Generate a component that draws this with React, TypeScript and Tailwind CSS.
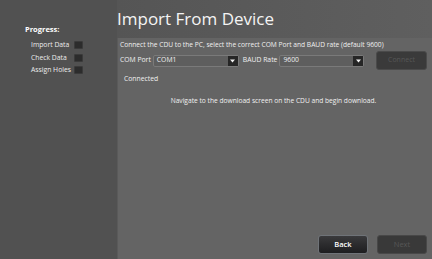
import React from 'react';

const steps = ['Import Data', 'Check Data', 'Assign Holes'];

const SelectBox = ({ value, width }: { value: string; width: string }) => (
  <div className={`flex h-[12px] ${width} items-stretch rounded-[2px] border border-[#7a7a7a] bg-[#5e5e5e]`}>
    <div className="flex flex-1 items-center pl-[3px] text-[6.8px] text-[#f0f0f0]">{value}</div>
    <div className="flex w-[10px] items-center justify-center bg-[#262626]">
      <svg width="5" height="4" viewBox="0 0 5 4">
        <path d="M0 0.5 L5 0.5 L2.5 3.5 Z" fill="#f2f2f2" />
      </svg>
    </div>
  </div>
);

export default function App() {
  return (
    <div
      className="flex h-[259px] w-[432px] overflow-hidden bg-[#525252] text-[#f0f0f0]"
      style={{ fontFamily: '"Open Sans", "Noto Sans", sans-serif' }}
    >
      <aside className="w-[117px] shrink-0 bg-[#515151] pt-[24px]">
        <div className="pl-[25px] text-[7.5px] font-bold leading-[10px] text-white">Progress:</div>
        <div className="mt-[7px] flex flex-col gap-[4.5px] pl-[31px]">
          {steps.map(s => (
            <div key={s} className="flex items-center">
              <span className="w-[43px] text-[6.8px] leading-[8px] text-[#ececec]">{s}</span>
              <span className="h-[8px] w-[9px] rounded-[1px] border border-[#3a3a3a] bg-[#2c2c2c]" />
            </div>
          ))}
        </div>
      </aside>

      <main className="flex flex-1 flex-col">
        <header className="h-[38px] shrink-0 bg-gradient-to-r from-[#555555] to-[#5f5f5f] pt-[8px]">
          <h1 className="text-[17px] font-normal leading-[22px] text-[#f4f4f4]">Import From Device</h1>
        </header>

        <section className="flex flex-1 flex-col border-l border-[#5a5a5a] bg-[#646464] pl-[2px] pr-[5px] pt-[2px]">
          <p className="text-[6.65px] leading-[10px] text-[#f0f0f0]">
            Connect the CDU to the PC, select the correct COM Port and BAUD rate (default 9600)
          </p>

          <div className="mt-[1px] flex items-center">
            <span className="text-[6.8px] text-[#f0f0f0]">COM Port</span>
            <div className="ml-[2px]">
              <SelectBox value="COM1" width="w-[86px]" />
            </div>
            <span className="ml-[4px] text-[6.8px] text-[#f0f0f0]">BAUD Rate</span>
            <div className="ml-[2px]">
              <SelectBox value="9600" width="w-[85px]" />
            </div>
            <button className="ml-auto h-[19px] w-[51px] rounded-[3px] border border-[#4a4a4a] bg-[#3a3a3a] text-[7px] text-[#575757]">
              Connect
            </button>
          </div>

          <div className="mt-[4px] pl-[4px] text-[6.8px] leading-[10px] text-[#f0f0f0]">Connected</div>

          <div className="mt-[12px] text-center text-[6.65px] leading-[10px] text-[#f0f0f0]">
            Navigate to the download screen on the CDU and begin download.
          </div>

          <div className="mt-auto mb-[5px] flex justify-end gap-[9px]">
            <button className="h-[19px] w-[50px] rounded-[3px] border border-[#6f7378] bg-gradient-to-b from-[#3a3a3c] to-[#1e1e20] text-[7.5px] font-semibold text-white">
              Back
            </button>
            <button className="h-[19px] w-[50px] rounded-[3px] border border-[#484848] bg-[#393939] text-[7.5px] text-[#575757]">
              Next
            </button>
          </div>
        </section>
      </main>
    </div>
  );
}
